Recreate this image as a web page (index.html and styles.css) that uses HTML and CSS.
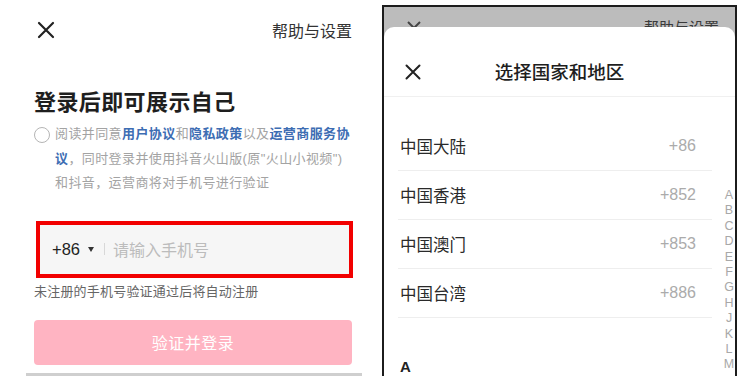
FILE: index.html
```html
<!DOCTYPE html>
<html lang="zh-CN">
<head>
  <meta charset="UTF-8" />
  <title>登录</title>
  <link rel="stylesheet" href="styles.css">
</head>
<body>

  <div class="screen">
    <div class="login">
      <div class="topbar">
        <svg class="close" width="18" height="18" viewBox="0 0 18 18">
          <path d="M2 2 L16 16 M16 2 L2 16" stroke="#222" stroke-width="2.2" stroke-linecap="round" fill="none" />
        </svg>
        <span class="help">帮助与设置</span>
      </div>

      <h1 class="heading">登录后即可展示自己</h1>

      <div class="agree">
        <span class="radio"></span>
        <p class="agree-text">阅读并同意<b>用户协议</b>和<b>隐私政策</b>以及<b>运营商服务协议</b>，同时登录并使用抖音火山版(原"火山小视频")<br>和抖音，运营商将对手机号进行验证</p>
      </div>

      <div class="phone-box">
        <span class="code">+86</span>
        <span class="caret"></span>
        <span class="divider"></span>
        <span class="placeholder">请输入手机号</span>
      </div>

      <p class="hint">未注册的手机号验证通过后将自动注册</p>

      <button class="submit">验证并登录</button>
      <div class="keyboard-edge"></div>
    </div>

    <div class="picker">
      <div class="behind">
        <svg width="16" height="16" viewBox="0 0 16 16">
          <path d="M2 2 L14 14 M14 2 L2 14" stroke="#444" stroke-width="2" fill="none" />
        </svg>
        <span>帮助与设置</span>
      </div>

      <div class="sheet">
        <div class="sheet-head">
          <svg class="sheet-close" width="16" height="16" viewBox="0 0 16 16">
            <path d="M1.5 1.5 L14.5 14.5 M14.5 1.5 L1.5 14.5" stroke="#222" stroke-width="2" stroke-linecap="round" fill="none" />
          </svg>
          <span class="sheet-title">选择国家和地区</span>
        </div>

        <ul class="regions">
          <li><span>中国大陆</span><span class="num">+86</span></li>
          <li><span>中国香港</span><span class="num">+852</span></li>
          <li><span>中国澳门</span><span class="num">+853</span></li>
          <li><span>中国台湾</span><span class="num">+886</span></li>
        </ul>

        <div class="section">A</div>

        <ol class="index">
          <li>A</li><li>B</li><li>C</li><li>D</li><li>E</li><li>F</li>
          <li>G</li><li>H</li><li>J</li><li>K</li><li>L</li><li>M</li>
        </ol>
      </div>
    </div>
  </div>

</body>
</html>
```

FILE: styles.css
```css
body {
  margin: 0;
  padding: 0;
  background: #fff;
  font-family: "Liberation Sans", "Noto Sans CJK SC", sans-serif;
  color: #222;
  width: 750px;
  height: 376px;
  overflow: hidden;
}

.screen {
  display: flex;
  align-items: flex-start;
  height: 376px;
}

/* left: login page */
.login {
  width: 365px;
  height: 376px;
  box-sizing: border-box;
  padding: 0 13px 0 34px;
  display: flex;
  flex-direction: column;
  position: relative;
}

.topbar {
  height: 60px;
  display: flex;
  align-items: center;
  justify-content: space-between;
  padding-left: 3px;
}
.help {
  font-size: 16px;
  color: #333;
}

.heading {
  margin: 28px 0 0;
  font-size: 22px;
  line-height: 30px;
  font-weight: bold;
  color: #1e1e1e;
  letter-spacing: 0.4px;
}

.agree {
  display: flex;
  align-items: flex-start;
  margin-top: 4px;
}
.radio {
  flex: none;
  width: 14px;
  height: 14px;
  border: 1.5px solid #b5b5b5;
  border-radius: 50%;
  margin-top: 5px;
  margin-right: 5px;
}
.agree-text {
  margin: 0;
  width: 298px;
  font-size: 13px;
  letter-spacing: 0.4px;
  line-height: 24.5px;
  color: #a3a3a3;
}
.agree-text b {
  color: #3d6db3;
}

.phone-box {
  margin: 25px 0 0 2px;
  width: 317px;
  height: 57px;
  box-sizing: border-box;
  border: 4px solid #f20000;
  background: #f6f6f6;
  display: flex;
  align-items: center;
  padding-left: 12px;
}
.code {
  font-size: 16.5px;
  color: #222;
}
.caret {
  margin-left: 8px;
  border-left: 3.5px solid transparent;
  border-right: 3.5px solid transparent;
  border-top: 5px solid #333;
}
.divider {
  margin-left: 10px;
  width: 1px;
  height: 12px;
  background: #d8d8d8;
}
.placeholder {
  margin-left: 8px;
  font-size: 16px;
  color: #bcbcbc;
}

.hint {
  margin: 4px 0 0;
  font-size: 13px;
  line-height: 20px;
  color: #666;
  letter-spacing: 0.2px;
}

.submit {
  margin-top: 18px;
  width: 318px;
  height: 45px;
  border: none;
  border-radius: 4px;
  background: #ffb4c2;
  color: #fff;
  font-family: inherit;
  font-size: 16px;
  letter-spacing: 0.5px;
}

.keyboard-edge {
  position: absolute;
  left: 26px;
  right: 3px;
  bottom: 0;
  height: 3px;
  background: #cfcfcf;
}

/* right: region picker */
.picker {
  margin: 5px 0 0 17px;
  width: 355px;
  height: 380px;
  box-sizing: border-box;
  border: 2px solid #1c1c1c;
  border-bottom: none;
  background: #bcbcbc;
  display: flex;
  flex-direction: column;
}

.behind {
  height: 20px;
  overflow: hidden;
  display: flex;
  justify-content: space-between;
  align-items: flex-start;
  padding: 13px 16px 0 22px;
  box-sizing: border-box;
  font-size: 15px;
  color: #3a3a3a;
  line-height: 16px;
}

.sheet {
  flex: 1;
  background: #fff;
  border-radius: 10px 10px 0 0;
  position: relative;
}

.sheet-head {
  height: 70px;
  box-sizing: border-box;
  padding-top: 31px;
  border-bottom: 1px solid #f0f0f0;
  display: flex;
  justify-content: center;
  position: relative;
}
.sheet-close {
  position: absolute;
  left: 21px;
  top: 37px;
}
.sheet-title {
  font-size: 18.5px;
  line-height: 30px;
  color: #1e1e1e;
  font-weight: 500;
}

.regions {
  list-style: none;
  margin: 25px 0 0 14px;
  padding: 0;
  width: 314px;
}
.regions li {
  height: 48px;
  border-bottom: 1px solid #eeeeee;
  display: flex;
  align-items: center;
  justify-content: space-between;
  padding: 0 16px 0 2px;
  font-size: 16.5px;
  color: #2a2a2a;
}
.regions .num {
  font-size: 16px;
  color: #ababab;
}

.section {
  margin: 40px 0 0 16px;
  font-size: 15px;
  font-weight: bold;
  color: #222;
}

.index {
  position: absolute;
  right: 0;
  top: 161px;
  width: 12px;
  list-style: none;
  margin: 0;
  padding: 0;
  text-align: center;
  font-size: 12.5px;
  line-height: 15.4px;
  color: #a8a8a8;
}
```
